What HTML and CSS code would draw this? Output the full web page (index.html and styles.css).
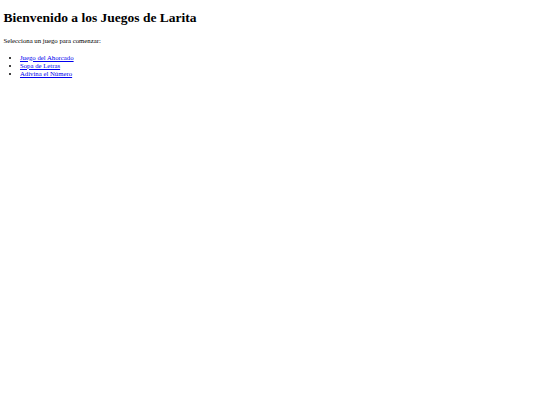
FILE: index.html
```html
<!DOCTYPE html>
<html lang="es">
<head>
<meta charset="utf-8">
<title>Juegos de Larita</title>
<link rel="stylesheet" href="styles.css">
</head>
<body class="page">
<h1 class="title">Bienvenido a los Juegos de Larita</h1>
<p class="intro">Selecciona un juego para comenzar:</p>
<ul class="games">
<li class="game"><a class="game-link" href="#">Juego del Ahorcado</a></li>
<li class="game"><a class="game-link" href="#">Sopa de Letras</a></li>
<li class="game"><a class="game-link" href="#">Adivina el Número</a></li>
</ul>
</body>
</html>
```

FILE: styles.css
```css
html {
  background: #ffffff;
}
.page {
  margin: 0 3.4px;
  padding-top: 0.1px;
  font-family: "Liberation Serif", "Times New Roman", serif;
  font-size: 6.75px;
  color: #000000;
}
.title {
  font-size: 13.5px;
  line-height: 15.6px;
  font-weight: bold;
  margin: 10.4px 0 11.4px;
}
.intro {
  line-height: 8px;
  margin: 0;
}
.games {
  margin: 8.2px 0 0;
  padding-left: 16.6px;
  list-style: disc;
}
.game {
  line-height: 8px;
}
.game-link {
  color: #0000ee;
  text-decoration: underline;
}
```
